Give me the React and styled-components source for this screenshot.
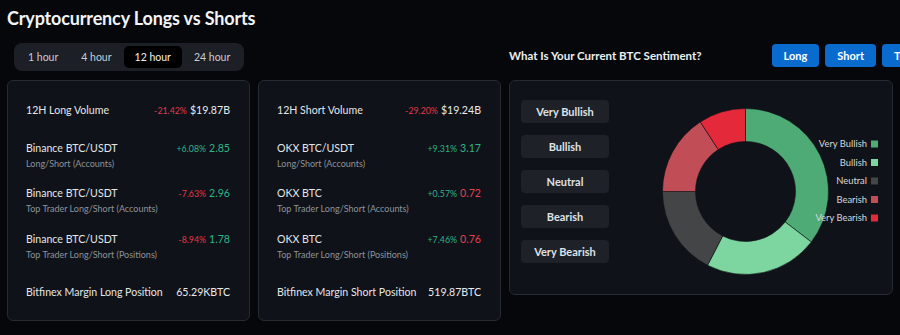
import React from "react";
import styled, { createGlobalStyle } from "styled-components";

const Global = createGlobalStyle`
  html, body { margin: 0; padding: 0; background: #05070b; overflow: hidden; }
  body { font-family: Lato, "Noto Sans", sans-serif; color: #e6e8eb; }
  * { box-sizing: border-box; }
`;

const Page = styled.div`
  width: 900px;
  height: 335px;
  padding: 0 7px;
`;

const Title = styled.h1`
  margin: 0;
  padding: 7px 0 0 0;
  height: 43px;
  font-size: 18px;
  font-weight: 700;
  color: #f2f3f5;
  letter-spacing: -0.15px;
`;

const Grid = styled.div`
  display: grid;
  grid-template-columns: 243px 243px 384px;
  column-gap: 8px;
  row-gap: 9px;
  align-items: start;
`;

const Tabs = styled.div`
  grid-column: 1 / 3;
  margin-left: 7px;
  justify-self: start;
  display: flex;
  gap: 1px;
  padding: 3px;
  background: #1c1f26;
  border-radius: 8px;
  height: 28px;
`;

const Tab = styled.div`
  display: flex;
  align-items: center;
  padding: 0 11px;
  font-size: 10.5px;
  color: ${(p) => (p.$active ? "#f0f0f0" : "#c9ccd1")};
  background: ${(p) => (p.$active ? "#000" : "transparent")};
  border-radius: 5px;
`;

const SentimentHeader = styled.div`
  display: flex;
  align-items: center;
  height: 28px;
  white-space: nowrap;
`;

const SentimentTitle = styled.div`
  font-size: 11.5px;
  font-weight: 700;
  color: #eceef0;
  flex: 0 0 auto;
  margin-top: -3px;
`;

const VoteGroup = styled.div`
  display: flex;
  gap: 6px;
  margin-left: 70px;
  flex: 0 0 auto;
  margin-top: -4px;
`;

const VoteButton = styled.button`
  height: 23px;
  padding: 0 12px;
  border: none;
  border-radius: 4px;
  background: #0a6bcf;
  color: #fff;
  font-family: inherit;
  font-size: 11px;
  font-weight: 700;
`;

const Card = styled.div`
  background: #0f1218;
  border: 1px solid #262a31;
  border-radius: 6px;
`;

const StatsCard = styled(Card)`
  height: 241px;
  padding: 6px 19px 5px 18px;
  display: grid;
  grid-template-rows: repeat(5, 45.5px);
`;

const Row = styled.div`
  display: flex;
  flex-direction: column;
  justify-content: center;
`;

const Line = styled.div`
  display: flex;
  justify-content: space-between;
  align-items: baseline;
  white-space: nowrap;
`;

const Label = styled.span`
  font-size: 10.6px;
  color: #e4e6e9;
`;

const Sub = styled.span`
  font-size: 9px;
  color: #8e929a;
  margin-top: 4px;
  white-space: nowrap;
`;

const Values = styled.span`
  display: flex;
  align-items: baseline;
  gap: 3px;
`;

const Pct = styled.span`
  font-size: 8.8px;
  color: ${(p) => (p.$up ? "#2fb48a" : "#e0394a")};
`;

const Val = styled.span`
  font-size: 10.6px;
  color: ${(p) =>
    p.$tone === "up" ? "#2fb48a" : p.$tone === "down" ? "#e5414f" : "#e8eaed"};
`;

const SentimentCard = styled(Card)`
  display: flex;
  height: 215px;
`;

const ChoiceColumn = styled.div`
  display: flex;
  flex-direction: column;
  gap: 12px;
  padding: 19px 0 0 11px;
`;

const Choice = styled.div`
  width: 88px;
  height: 23px;
  display: flex;
  align-items: center;
  justify-content: center;
  background: #1e2128;
  border-radius: 4px;
  font-size: 11px;
  font-weight: 700;
  color: #dfe2e6;
`;

const ChartSvg = styled.svg`
  display: block;
  flex: 0 0 auto;
`;

const LegendText = styled.text`
  font-family: Lato, "Noto Sans", sans-serif;
  font-size: 9.4px;
  fill: #d6d8db;
`;

const left = [
  { label: "12H Long Volume", pct: "-21.42%", up: false, val: "$19.87B" },
  { label: "Binance BTC/USDT", sub: "Long/Short (Accounts)", pct: "+6.08%", up: true, val: "2.85", tone: "up" },
  { label: "Binance BTC/USDT", sub: "Top Trader Long/Short (Accounts)", pct: "-7.63%", up: false, val: "2.96", tone: "up" },
  { label: "Binance BTC/USDT", sub: "Top Trader Long/Short (Positions)", pct: "-8.94%", up: false, val: "1.78", tone: "up" },
  { label: "Bitfinex Margin Long Position", val: "65.29KBTC" },
];

const right = [
  { label: "12H Short Volume", pct: "-29.20%", up: false, val: "$19.24B" },
  { label: "OKX BTC/USDT", sub: "Long/Short (Accounts)", pct: "+9.31%", up: true, val: "3.17", tone: "up" },
  { label: "OKX BTC", sub: "Top Trader Long/Short (Accounts)", pct: "+0.57%", up: true, val: "0.72", tone: "down" },
  { label: "OKX BTC", sub: "Top Trader Long/Short (Positions)", pct: "+7.46%", up: true, val: "0.76", tone: "down" },
  { label: "Bitfinex Margin Short Position", val: "519.87BTC" },
];

const segments = [
  { name: "Very Bullish", from: 0, to: 127.5, color: "#4fab76" },
  { name: "Bullish", from: 127.5, to: 207.2, color: "#7dd5a0" },
  { name: "Neutral", from: 207.2, to: 270, color: "#444546" },
  { name: "Bearish", from: 270, to: 327, color: "#c14d57" },
  { name: "Very Bearish", from: 327, to: 360, color: "#e4293b" },
];

function arcPath(cx, cy, r0, r1, a0, a1) {
  const rad = (a) => ((a - 90) * Math.PI) / 180;
  const p = (r, a) => [cx + r * Math.cos(rad(a)), cy + r * Math.sin(rad(a))];
  const large = a1 - a0 > 180 ? 1 : 0;
  const [x1, y1] = p(r1, a0);
  const [x2, y2] = p(r1, a1);
  const [x3, y3] = p(r0, a1);
  const [x4, y4] = p(r0, a0);
  return `M${x1} ${y1} A${r1} ${r1} 0 ${large} 1 ${x2} ${y2} L${x3} ${y3} A${r0} ${r0} 0 ${large} 0 ${x4} ${y4} Z`;
}

function StatList({ rows }) {
  return (
    <StatsCard>
      {rows.map((r, i) => (
        <Row key={i}>
          <Line>
            <Label>{r.label}</Label>
            <Values>
              {r.pct && <Pct $up={r.up}>{r.pct}</Pct>}
              <Val $tone={r.tone}>{r.val}</Val>
            </Values>
          </Line>
          {r.sub && <Sub>{r.sub}</Sub>}
        </Row>
      ))}
    </StatsCard>
  );
}

function Donut() {
  const cx = 136.5;
  const cy = 110.5;
  const legendY = [63, 81.5, 100, 118.5, 137];
  return (
    <ChartSvg width="283" height="213" viewBox="0 0 283 213">
      {segments.map((s) => (
        <path
          key={s.name}
          d={arcPath(cx, cy, 50, 83, s.from, s.to)}
          fill={s.color}
          stroke="#0f1218"
          strokeWidth="0.6"
        />
      ))}
      {segments.map((s, i) => (
        <g key={s.name + "l"}>
          <LegendText x="258" y={legendY[i] + 3.3} textAnchor="end">
            {s.name}
          </LegendText>
          <rect x="262" y={legendY[i] - 3.5} width="7" height="7" fill={s.color} />
        </g>
      ))}
    </ChartSvg>
  );
}

export default function App() {
  return (
    <Page>
      <Global />
      <Title>Cryptocurrency Longs vs Shorts</Title>
      <Grid>
        <Tabs>
          <Tab>1 hour</Tab>
          <Tab>4 hour</Tab>
          <Tab $active>12 hour</Tab>
          <Tab>24 hour</Tab>
        </Tabs>
        <SentimentHeader>
          <SentimentTitle>What Is Your Current BTC Sentiment?</SentimentTitle>
          <VoteGroup>
            <VoteButton>Long</VoteButton>
            <VoteButton>Short</VoteButton>
            <VoteButton>Trade</VoteButton>
          </VoteGroup>
        </SentimentHeader>
        <StatList rows={left} />
        <StatList rows={right} />
        <SentimentCard>
          <ChoiceColumn>
            <Choice>Very Bullish</Choice>
            <Choice>Bullish</Choice>
            <Choice>Neutral</Choice>
            <Choice>Bearish</Choice>
            <Choice>Very Bearish</Choice>
          </ChoiceColumn>
          <Donut />
        </SentimentCard>
      </Grid>
    </Page>
  );
}
